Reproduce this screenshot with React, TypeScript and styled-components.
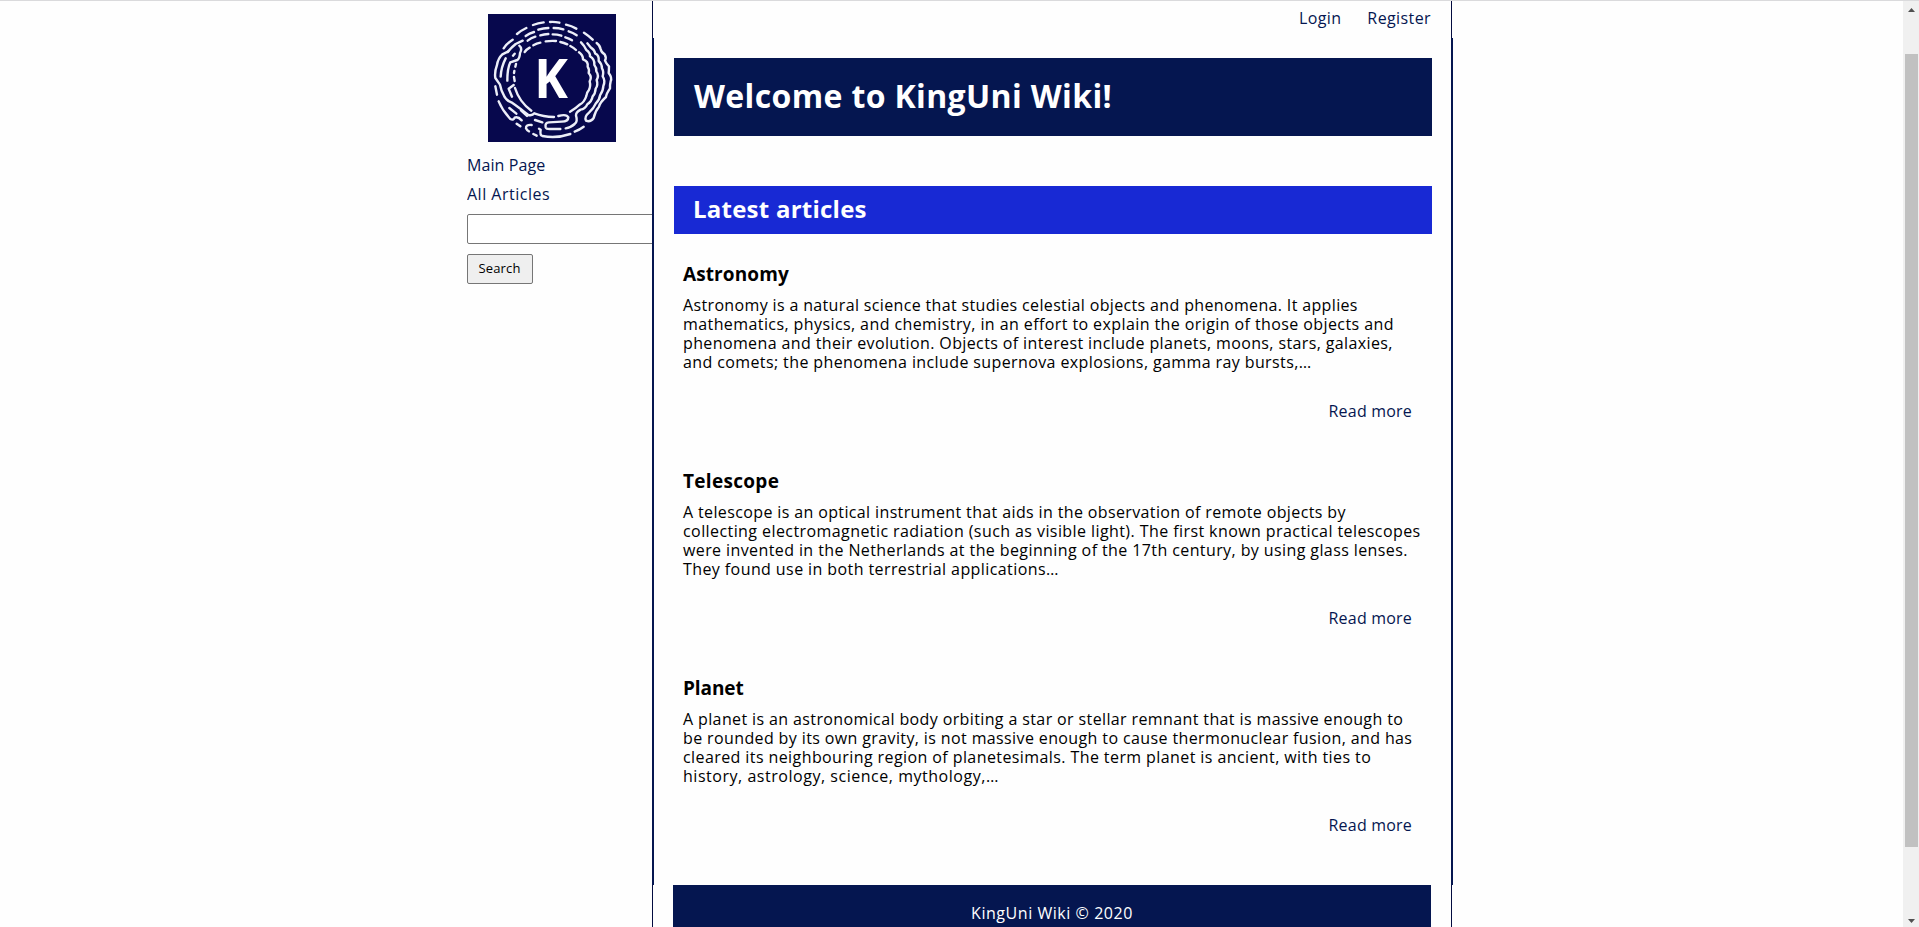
import React from 'react';
import styled, { createGlobalStyle } from 'styled-components';

const navy = '#051650';
const frameNavy = '#040c40';

const GlobalStyle = createGlobalStyle`
  * { box-sizing: border-box; }
  body {
    margin: 0;
    background: #fefefe;
    color: #000;
    font: 16px/19px 'Open Sans', sans-serif;
    overflow: hidden;
  }
  h1, h2, h3, p { margin: 0; }
`;

const Window = styled.div`
  display: flex;
  justify-content: space-between;
  height: 927px;
  overflow: hidden;
  border-top: 1px solid #dadadc;
`;

const Page = styled.div`
  display: flex;
  align-items: flex-start;
  padding-left: 467px;
`;

const Sidebar = styled.aside`
  width: 185px;
  overflow: hidden;
  padding-top: 13px;
`;

const Logo = styled.svg`
  display: block;
  width: 128px;
  height: 128px;
  margin-left: 21px;
`;

const LogoLines = styled.g`
  fill: none;
  stroke: #eceef8;
  stroke-width: 7.2;
  stroke-linecap: round;
  stroke-linejoin: round;
`;

const LogoLetter = styled.text`
  fill: #fff;
  font: 700 163px 'Open Sans', sans-serif;
`;

const SideNav = styled.nav`
  display: flex;
  flex-direction: column;
  gap: 10px;
  padding-top: 14px;
`;

const TextLink = styled.a<{ $tracking?: number }>`
  color: ${navy};
  text-decoration: none;
  white-space: nowrap;
  letter-spacing: ${(p) => p.$tracking ?? 0}px;
`;

const SearchForm = styled.form`
  display: flex;
  flex-direction: column;
  align-items: flex-start;
  gap: 10px;
  padding-top: 10px;
`;

const SearchInput = styled.input`
  width: 230px;
  height: 30px;
  border: 1px solid #767676;
  border-radius: 2px;
  background: #fff;
`;

const SearchButton = styled.button`
  width: 66px;
  height: 30px;
  padding: 0 1px 2px 0;
  border: 1px solid #767676;
  border-radius: 2px;
  background: #efefef;
  color: #000;
  font: 13px 'Open Sans', sans-serif;
  letter-spacing: 0.15px;
`;

const Main = styled.main`
  width: 801px;
`;

const TopBar = styled.header`
  display: flex;
  justify-content: flex-end;
  gap: 26px;
  width: 800px;
  height: 37px;
  padding: 8px 20px 0;
  border: solid ${frameNavy};
  border-width: 0 1px;
`;

const Content = styled.section`
  height: 847px;
  padding: 20px 19px 0 20px;
  border: solid ${navy};
  border-width: 0 2px;
`;

const Welcome = styled.h1`
  height: 78px;
  padding-left: 20px;
  background: ${navy};
  color: #fff;
  font-size: 32px;
  line-height: 75px;
  letter-spacing: 0.36px;
`;

const SectionTitle = styled.h2`
  height: 48px;
  margin: 50px 0 28px;
  padding-left: 19px;
  background: #1829d4;
  color: #fff;
  font-size: 24px;
  line-height: 46px;
  letter-spacing: 0.24px;
`;

const Article = styled.article`
  display: flex;
  flex-direction: column;
  height: 207px;
  padding: 0 20px 0 9px;
`;

const ArticleTitle = styled.h3<{ $tracking: number }>`
  margin-bottom: 10px;
  font-size: 19px;
  line-height: 24px;
  letter-spacing: ${(p) => p.$tracking}px;
`;

const Line = styled.span<{ $tracking: number }>`
  display: block;
  white-space: nowrap;
  letter-spacing: ${(p) => p.$tracking}px;
`;

const ReadMore = styled(TextLink)`
  align-self: flex-end;
  margin-top: 30px;
`;

const FooterFrame = styled.footer`
  width: 800px;
  padding: 0 20px;
  border: solid ${frameNavy};
  border-width: 0 1px;
`;

const FooterBar = styled.div`
  height: 58px;
  padding-top: 19px;
  background: ${navy};
  color: #fff;
  text-align: center;
  letter-spacing: 0.55px;
`;

const ScrollBar = styled.div`
  display: flex;
  flex-direction: column;
  align-items: center;
  width: 16px;
  background: #f0f0f0;
`;

const ScrollThumb = styled.div`
  width: 13px;
  height: 793px;
  margin: 42px 0 65px 1px;
  background: #c1c1c1;
`;

const Arrow = styled.svg`
  display: block;
  width: 7px;
  height: 4px;
  margin-top: 7px;
  fill: #505050;
`;

type TextLine = [text: string, tracking: number];

const articles: { title: string; tracking: number; lines: TextLine[] }[] = [
  {
    title: 'Astronomy',
    tracking: 0.1,
    lines: [
      ['Astronomy is a natural science that studies celestial objects and phenomena. It applies', 0.35],
      ['mathematics, physics, and chemistry, in an effort to explain the origin of those objects and', 0.41],
      ['phenomena and their evolution. Objects of interest include planets, moons, stars, galaxies,', 0.38],
      ['and comets; the phenomena include supernova explosions, gamma ray bursts,…', 0.39],
    ],
  },
  {
    title: 'Telescope',
    tracking: 0.3,
    lines: [
      ['A telescope is an optical instrument that aids in the observation of remote objects by', 0.37],
      ['collecting electromagnetic radiation (such as visible light). The first known practical telescopes', 0.42],
      ['were invented in the Netherlands at the beginning of the 17th century, by using glass lenses.', 0.4],
      ['They found use in both terrestrial applications…', 0.41],
    ],
  },
  {
    title: 'Planet',
    tracking: -0.1,
    lines: [
      ['A planet is an astronomical body orbiting a star or stellar remnant that is massive enough to', 0.38],
      ['be rounded by its own gravity, is not massive enough to cause thermonuclear fusion, and has', 0.38],
      ['cleared its neighbouring region of planetesimals. The term planet is ancient, with ties to', 0.41],
      ['history, astrology, science, mythology,…', 0.53],
    ],
  },
];

const KingUniLogo = () => (
  <Logo viewBox="24 18 384 384">
    <rect x="24" y="18" width="384" height="384" fill="#07084d" />
    <LogoLines>
      {/* dashed arcs, outer ring to inner ring */}
      <path d="M71 121Q81 106 98 95M111 78Q124 67 139 60M159 51Q174 45 191 43M210 42Q224 41 238 44M258 50Q275 54 289 62M312 74Q326 83 338 95" />
      <path d="M137 84Q148 76 162 72M175 65Q190 60 205 60M221 60Q236 60 250 64M266 70Q279 74 290 82" />
      <path d="M143 98Q153 90 166 86M181 82Q192 79 205 78M218 79Q232 79 244 83M256 88Q267 91 276 97" />
      <path d="M134 132Q140 124 149 119M160 112Q170 106 181 104M197 100Q212 98 228 99M241 102Q252 104 262 109M271 114Q281 119 288 126" />
      {/* winding tracks on the right */}
      <path d="M350 105Q360 112 362 124Q364 134 374 139Q380 149 375 158Q379 168 387 175Q387 187 386 195Q397 209 392 220Q389 233 390 241Q379 257 378 267Q360 283 357 296Q345 310 341 330Q331 344 318 338Q312 326 327 314Q342 300 347 287Q359 275 360 262Q370 247 370 234Q377 218 368 205Q372 190 366 181Q365 166 356 159Q358 142 346 137Q342 124 333 119L322 106" />
      <path d="M303 103Q314 114 319 126Q331 134 330 145Q345 154 343 171Q350 179 349 190Q358 203 350 216Q355 231 347 242Q346 257 338 265Q335 281 322 289Q315 304 302 305Q287 313 288 323Q294 341 284 348Q272 359 257 361" />
      <path d="M297 133Q309 141 309 154Q326 160 323 176Q329 184 326 195Q337 207 329 220Q333 235 326 247Q320 253 319 264Q313 283 299 290Q289 300 270 311" />
      {/* left side and bottom */}
      <path d="M85 130L67 139Q54 151 51 171Q43 192 46 210L60 230Q64 250 72 263Q78 277 94 283Q107 292 121 302Q134 313 145 321Q157 324 163 316Q190 326 222 327" />
      <path d="M128 98L107 108Q91 121 83 132" />
      <path d="M118 113Q128 121 120 135Q119 151 112 156L91 163Q82 181 82 218" />
      <path d="M77 151Q63 178 62 206M99 143L104 137M108 168L106 176M103 189L102 195M102 207L104 219M101 231L86 242L96 266M105 240Q118 282 154 308" />
      <path d="M46 235L51 260M56 280Q67 307 91 333Q100 338 104 329Q114 325 125 337M88 300L109 317M110 347L121 355M123 307L141 324M165 336L187 343" />
      <path d="M235 324Q260 317 265 328Q265 341 245 341L207 343Q194 344 197 358Q199 364 213 363L241 363" />
      <path d="M155 351Q137 349 138 361Q141 368 147 370M160 378L170 383M177 362L182 365Q179 381 187 384Q230 392 271 378M284 371Q299 365 311 356" />
    </LogoLines>
    <LogoLetter x="163" y="271" textLength="101" lengthAdjust="spacingAndGlyphs">K</LogoLetter>
  </Logo>
);

export default function App() {
  return (
    <>
      <GlobalStyle />
      <Window>
        <Page>
          <Sidebar>
            <KingUniLogo />
            <SideNav>
              <TextLink $tracking={0.1}>Main Page</TextLink>
              <TextLink $tracking={0.5}>All Articles</TextLink>
            </SideNav>
            <SearchForm>
              <SearchInput aria-label="Search articles" />
              <SearchButton type="button">Search</SearchButton>
            </SearchForm>
          </Sidebar>
          <Main>
            <TopBar>
              <TextLink $tracking={0.35}>Login</TextLink>
              <TextLink $tracking={0.4}>Register</TextLink>
            </TopBar>
            <Content>
              <Welcome>Welcome to KingUni Wiki!</Welcome>
              <SectionTitle>Latest articles</SectionTitle>
              {articles.map(({ title, tracking, lines }) => (
                <Article key={title}>
                  <ArticleTitle $tracking={tracking}>{title}</ArticleTitle>
                  <p>
                    {lines.map(([text, lineTracking]) => (
                      <Line key={text} $tracking={lineTracking}>{text}</Line>
                    ))}
                  </p>
                  <ReadMore $tracking={0.2}>Read more</ReadMore>
                </Article>
              ))}
            </Content>
            <FooterFrame>
              <FooterBar>KingUni Wiki © 2020</FooterBar>
            </FooterFrame>
          </Main>
        </Page>
        <ScrollBar>
          <Arrow viewBox="0 0 7 4"><path d="M0 4L3.5 0L7 4Z" /></Arrow>
          <ScrollThumb />
          <Arrow viewBox="0 0 7 4"><path d="M0 0L3.5 4L7 0Z" /></Arrow>
        </ScrollBar>
      </Window>
    </>
  );
}
